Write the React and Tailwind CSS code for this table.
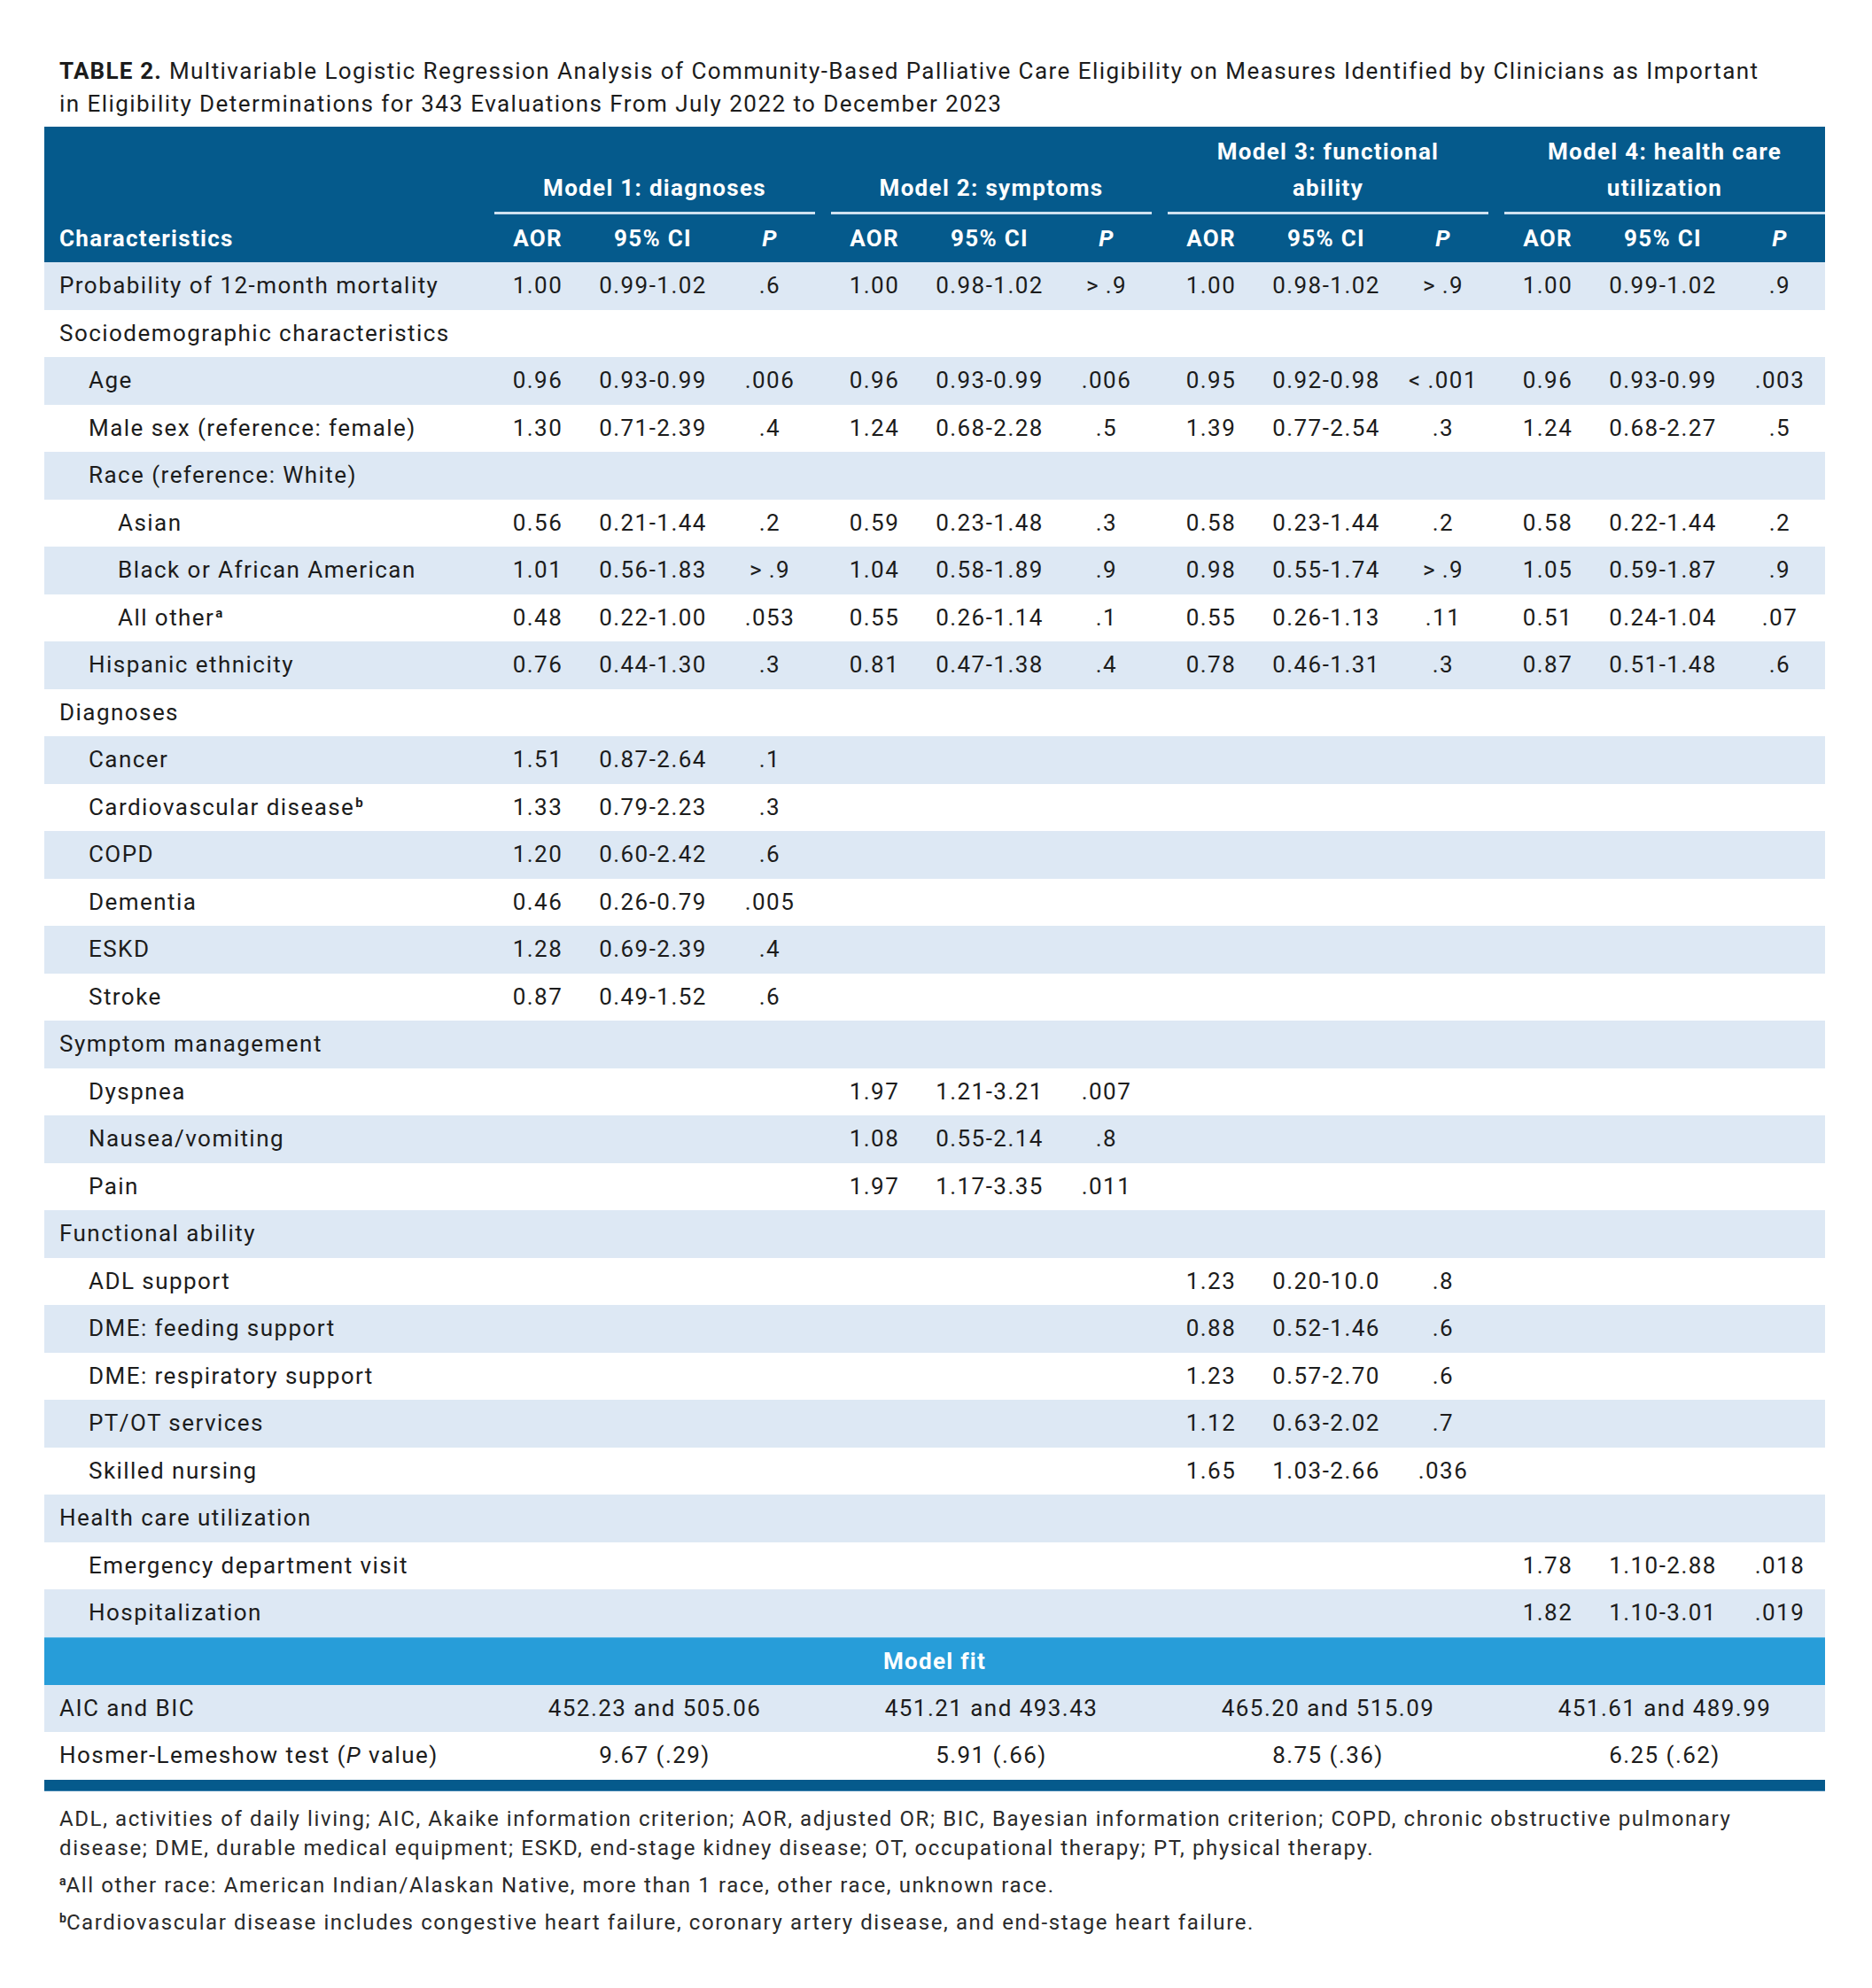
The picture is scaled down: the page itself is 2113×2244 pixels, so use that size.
import React, { Fragment } from "react";

const GRID =
  "grid grid-cols-[508px_98px_162px_102px_18px_98px_162px_102px_18px_98px_162px_102px_18px_98px_162px_102px]";

const rows = [
  ["Probability of 12-month mortality", 0, [["1.00", "0.99-1.02", ".6"], ["1.00", "0.98-1.02", ">\u2009.9"], ["1.00", "0.98-1.02", ">\u2009.9"], ["1.00", "0.99-1.02", ".9"]]],
  ["Sociodemographic characteristics", 0, []],
  ["Age", 1, [["0.96", "0.93-0.99", ".006"], ["0.96", "0.93-0.99", ".006"], ["0.95", "0.92-0.98", "<\u2009.001"], ["0.96", "0.93-0.99", ".003"]]],
  ["Male sex (reference: female)", 1, [["1.30", "0.71-2.39", ".4"], ["1.24", "0.68-2.28", ".5"], ["1.39", "0.77-2.54", ".3"], ["1.24", "0.68-2.27", ".5"]]],
  ["Race (reference: White)", 1, []],
  ["Asian", 2, [["0.56", "0.21-1.44", ".2"], ["0.59", "0.23-1.48", ".3"], ["0.58", "0.23-1.44", ".2"], ["0.58", "0.22-1.44", ".2"]]],
  ["Black or African American", 2, [["1.01", "0.56-1.83", ">\u2009.9"], ["1.04", "0.58-1.89", ".9"], ["0.98", "0.55-1.74", ">\u2009.9"], ["1.05", "0.59-1.87", ".9"]]],
  ["All other", 2, [["0.48", "0.22-1.00", ".053"], ["0.55", "0.26-1.14", ".1"], ["0.55", "0.26-1.13", ".11"], ["0.51", "0.24-1.04", ".07"]], "a"],
  ["Hispanic ethnicity", 1, [["0.76", "0.44-1.30", ".3"], ["0.81", "0.47-1.38", ".4"], ["0.78", "0.46-1.31", ".3"], ["0.87", "0.51-1.48", ".6"]]],
  ["Diagnoses", 0, []],
  ["Cancer", 1, [["1.51", "0.87-2.64", ".1"]]],
  ["Cardiovascular disease", 1, [["1.33", "0.79-2.23", ".3"]], "b"],
  ["COPD", 1, [["1.20", "0.60-2.42", ".6"]]],
  ["Dementia", 1, [["0.46", "0.26-0.79", ".005"]]],
  ["ESKD", 1, [["1.28", "0.69-2.39", ".4"]]],
  ["Stroke", 1, [["0.87", "0.49-1.52", ".6"]]],
  ["Symptom management", 0, []],
  ["Dyspnea", 1, [null, ["1.97", "1.21-3.21", ".007"]]],
  ["Nausea/vomiting", 1, [null, ["1.08", "0.55-2.14", ".8"]]],
  ["Pain", 1, [null, ["1.97", "1.17-3.35", ".011"]]],
  ["Functional ability", 0, []],
  ["ADL support", 1, [null, null, ["1.23", "0.20-10.0", ".8"]]],
  ["DME: feeding support", 1, [null, null, ["0.88", "0.52-1.46", ".6"]]],
  ["DME: respiratory support", 1, [null, null, ["1.23", "0.57-2.70", ".6"]]],
  ["PT/OT services", 1, [null, null, ["1.12", "0.63-2.02", ".7"]]],
  ["Skilled nursing", 1, [null, null, ["1.65", "1.03-2.66", ".036"]]],
  ["Health care utilization", 0, []],
  ["Emergency department visit", 1, [null, null, null, ["1.78", "1.10-2.88", ".018"]]],
  ["Hospitalization", 1, [null, null, null, ["1.82", "1.10-3.01", ".019"]]],
];

const indentCls = ["pl-[17px]", "pl-[50px]", "pl-[83px]"];

function Sup({ c }) {
  return (
    <span className="relative -top-[9px] text-[15px] font-bold leading-none ml-[1px] tracking-normal">{c}</span>
  );
}

function DataRow({ label, indent, groups, sup, light }) {
  return (
    <div className={`${GRID} h-[53.5px] items-center ${light ? "bg-[#dde8f4]" : "bg-white"}`}>
      <div className={`${indentCls[indent]} whitespace-nowrap`}>
        {label}
        {sup && <Sup c={sup} />}
      </div>
      {[0, 1, 2, 3].map((i) => {
        const g = groups[i];
        return (
          <Fragment key={i}>
            <div className="text-center whitespace-nowrap">{g ? g[0] : ""}</div>
            <div className="text-center whitespace-nowrap">{g ? g[1] : ""}</div>
            <div className="text-center whitespace-nowrap">{g ? g[2] : ""}</div>
            {i < 3 && <div />}
          </Fragment>
        );
      })}
    </div>
  );
}

function FitRow({ label, values, light }) {
  return (
    <div className={`grid grid-cols-[508px_380px_380px_380px_362px] h-[53.5px] items-center ${light ? "bg-[#dde8f4]" : "bg-white"}`}>
      <div className="pl-[17px] whitespace-nowrap">{label}</div>
      {values.map((v, i) => (
        <div key={i} className={`text-center whitespace-nowrap ${i < 3 ? "pr-[18px]" : ""}`}>
          {v}
        </div>
      ))}
    </div>
  );
}

export default function App() {
  const groupLabels = [
    ["Model 1: diagnoses"],
    ["Model 2: symptoms"],
    ["Model 3: functional", "ability"],
    ["Model 4: health care", "utilization"],
  ];
  return (
    <div className="w-[2113px] h-[2244px] bg-white text-[#1c1c1c] font-['Roboto','Liberation_Sans',sans-serif] text-[26px] tracking-[1.45px]">
      <div className="pt-[62px] pl-[67px] leading-[37px]">
        <span className="font-bold tracking-[1.2px]">TABLE 2.</span> Multivariable Logistic Regression Analysis of Community-Based Palliative Care Eligibility on Measures Identified by Clinicians as Important
        <br />
        in Eligibility Determinations for 343 Evaluations From July 2022 to December 2023
      </div>

      <div className="ml-[50px] mt-[7px] w-[2010px]">
        <div className="bg-[#055a8c] text-white font-bold tracking-[1.3px]">
          <div className="grid grid-cols-[508px_362px_18px_362px_18px_362px_18px_362px] h-[99px]">
            <div />
            {groupLabels.map((lines, i) => (
              <Fragment key={i}>
                <div className="flex flex-col items-center justify-end border-b-[3px] border-[#cfe1f0] pb-[6px] leading-[41px]">
                  {lines.map((l, j) => (
                    <div key={j} className="whitespace-nowrap">{l}</div>
                  ))}
                </div>
                {i < 3 && <div />}
              </Fragment>
            ))}
          </div>
          <div className={`${GRID} h-[54px] items-center`}>
            <div className="pl-[17px]">Characteristics</div>
            {[0, 1, 2, 3].map((i) => (
              <Fragment key={i}>
                <div className="text-center">AOR</div>
                <div className="text-center whitespace-nowrap">95% CI</div>
                <div className="text-center italic">P</div>
                {i < 3 && <div />}
              </Fragment>
            ))}
          </div>
        </div>

        {rows.map((r, i) => (
          <DataRow key={i} label={r[0]} indent={r[1]} groups={r[2]} sup={r[3]} light={i % 2 === 0} />
        ))}

        <div className="h-[54px] bg-[#279dd9] border-t border-[#62b9e6] flex items-center justify-center text-white font-bold tracking-[1.3px]">
          Model fit
        </div>
        <FitRow light label="AIC and BIC" values={["452.23 and 505.06", "451.21 and 493.43", "465.20 and 515.09", "451.61 and 489.99"]} />
        <FitRow
          label={
            <>
              Hosmer-Lemeshow test (<span className="italic">P</span> value)
            </>
          }
          values={["9.67 (.29)", "5.91 (.66)", "8.75 (.36)", "6.25 (.62)"]}
        />
        <div className="h-[13px] bg-[#055a8c] border-b border-[#3f84b0]" />
      </div>

      <div className="mt-[15px] pl-[67px] text-[24px] leading-[33px] text-[#2a2a2a] tracking-[1.6px]">
        <p>
          ADL, activities of daily living; AIC, Akaike information criterion; AOR, adjusted OR; BIC, Bayesian information criterion; COPD, chronic obstructive pulmonary
          <br />
          disease; DME, durable medical equipment; ESKD, end-stage kidney disease; OT, occupational therapy; PT, physical therapy.
        </p>
        <p className="mt-[9px]">
          <span className="relative -top-[8px] text-[14px] font-bold leading-none tracking-normal">a</span>All other race: American Indian/Alaskan Native, more than 1 race, other race, unknown race.
        </p>
        <p className="mt-[9px]">
          <span className="relative -top-[8px] text-[14px] font-bold leading-none tracking-normal">b</span>Cardiovascular disease includes congestive heart failure, coronary artery disease, and end-stage heart failure.
        </p>
      </div>
    </div>
  );
}
